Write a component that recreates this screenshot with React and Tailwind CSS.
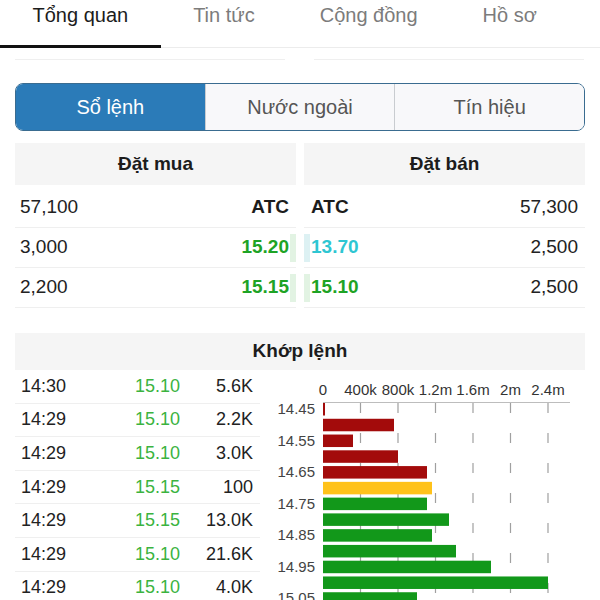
const tabs = ['Tổng quan', 'Tin tức', 'Cộng đồng', 'Hồ sơ'];
const segments = ['Sổ lệnh', 'Nước ngoài', 'Tín hiệu'];

const bids = [
  { qty: '57,100', price: 'ATC', tone: 'atc' },
  { qty: '3,000', price: '15.20', tone: 'up' },
  { qty: '2,200', price: '15.15', tone: 'up' },
];

const asks = [
  { price: 'ATC', qty: '57,300', tone: 'atc' },
  { price: '13.70', qty: '2,500', tone: 'floor' },
  { price: '15.10', qty: '2,500', tone: 'up' },
];

const ticks = [
  ['14:30', '15.10', '5.6K'],
  ['14:29', '15.10', '2.2K'],
  ['14:29', '15.10', '3.0K'],
  ['14:29', '15.15', '100'],
  ['14:29', '15.15', '13.0K'],
  ['14:29', '15.10', '21.6K'],
  ['14:29', '15.10', '4.0K'],
  ['14:29', '15.10', '1.5K'],
];

// volume by price level, width in px (37.5px = 400k)
const levels = [
  { w: 2, c: '#a30b0b' },
  { w: 71, c: '#a30b0b' },
  { w: 30, c: '#a30b0b' },
  { w: 75, c: '#a30b0b' },
  { w: 104, c: '#a30b0b' },
  { w: 109, c: '#ffc21a' },
  { w: 104, c: '#12981a' },
  { w: 126, c: '#12981a' },
  { w: 109, c: '#12981a' },
  { w: 133, c: '#12981a' },
  { w: 168, c: '#12981a' },
  { w: 225, c: '#12981a' },
  { w: 94, c: '#12981a' },
  { w: 60, c: '#12981a' },
];

const axis = ['0', '400k', '800k', '1.2m', '1.6m', '2m', '2.4m'];

const toneClass = {
  atc: 'text-[#1c1c1c] font-bold',
  up: 'text-[#1ea325] font-bold',
  floor: 'text-[#2ec6d2] font-bold',
};

const barClass = {
  up: 'bg-[#e2f3e3]',
  floor: 'bg-[#ddf1f3]',
};

function VolumeChart() {
  const x0 = 53;
  const step = 37.5;
  const pitch = 15.77;
  return (
    <svg width="315" height="240" style={{ fontFamily: '"Liberation Sans", Arial, sans-serif' }}>
      {axis.map((a, i) => (
        <text key={a} x={x0 + i * step} y="25" fontSize="15" fill="#333" textAnchor="middle">
          {a}
        </text>
      ))}
      <line x1={x0} y1="32.5" x2="300" y2="32.5" stroke="#bdbdbd" strokeWidth="1.2" />
      {axis.slice(1).map((a, i) => (
        <line
          key={a}
          x1={x0 + (i + 1) * step}
          y1="33"
          x2={x0 + (i + 1) * step}
          y2="240"
          stroke="#a0a0a0"
          strokeWidth="1.2"
          strokeDasharray="10 20"
        />
      ))}
      {levels.map((l, i) => (
        <rect key={i} x={x0} y={33 + i * pitch} width={l.w} height="12.5" fill={l.c} />
      ))}
      {levels.map((l, i) =>
        i % 2 === 0 ? (
          <text
            key={i}
            x="45"
            y={33 + i * pitch + 11}
            fontSize="15"
            fill="#444"
            textAnchor="end"
          >
            {(14.45 + i * 0.05).toFixed(2)}
          </text>
        ) : null
      )}
    </svg>
  );
}

export default function App() {
  return (
    <div
      className="w-[600px] h-[600px] overflow-hidden bg-white"
      style={{ fontFamily: '"Liberation Sans", Arial, sans-serif' }}
    >
      {/* Top tabs */}
      <div className="flex h-[48px] border-b border-[#ececec]">
        {tabs.map((t, i) => (
          <div
            key={t}
            className={`relative px-[32.5px] pt-[3px] text-[20px] leading-[24px] ${
              i === 0 ? 'text-[#1c1c1c]' : 'text-[#7c7c7c]'
            }`}
          >
            {t}
            {i === 0 && <div className="absolute left-0 right-0 bottom-[-1px] h-[3px] bg-[#111]" />}
          </div>
        ))}
      </div>

      {/* scrolled content edge */}
      <div className="grid grid-cols-2 gap-[29px] pl-[15px] pr-[16px]">
        <div className="h-[12px] border-b border-[#efefef]" />
        <div className="h-[12px] border-b border-[#efefef]" />
      </div>

      {/* Segmented control */}
      <div className="mx-[15px] mt-[23px] flex h-[48px] overflow-hidden rounded-[8px] border border-[#3a6c90]">
        {segments.map((s, i) => (
          <div
            key={s}
            className={`flex flex-1 items-center justify-center text-[20px] ${
              i === 0
                ? 'bg-[#2b7bb8] text-white'
                : 'bg-[#f8f8fa] text-[#555] border-l border-[#c9ccd0]'
            }`}
          >
            {s}
          </div>
        ))}
      </div>

      {/* Order book */}
      <div className="mt-[12px] grid grid-cols-2 gap-2 px-[15px]">
        <div>
          <div className="flex h-[42px] items-center justify-center bg-[#f5f5f5] text-[19px] font-bold text-[#1c1c1c]">
            Đặt mua
          </div>
          <div className="mt-[3px]">
            {bids.map((b) => (
              <div key={b.qty} className="flex h-[40px] items-center border-b border-[#efefef] text-[19px]">
                <span className="flex-1 pl-[5px] text-[#222]">{b.qty}</span>
                <span className={toneClass[b.tone]}>{b.price}</span>
                <span className={`ml-[1px] h-[28px] w-[6px] ${barClass[b.tone] || ''}`} />
              </div>
            ))}
          </div>
        </div>
        <div>
          <div className="flex h-[42px] items-center justify-center bg-[#f5f5f5] text-[19px] font-bold text-[#1c1c1c]">
            Đặt bán
          </div>
          <div className="mt-[3px]">
            {asks.map((a, i) => (
              <div key={i} className="flex h-[40px] items-center border-b border-[#efefef] text-[19px]">
                <span className={`mr-[1px] h-[28px] w-[6px] ${barClass[a.tone] || ''}`} />
                <span className={toneClass[a.tone]}>{a.price}</span>
                <span className="flex-1 pr-[7px] text-right text-[#222]">{a.qty}</span>
              </div>
            ))}
          </div>
        </div>
      </div>

      {/* Matched orders */}
      <div className="mx-[15px] mt-[25px] flex h-[37px] items-center justify-center bg-[#f5f5f5] text-[19px] font-bold text-[#1c1c1c]">
        Khớp lệnh
      </div>
      <div className="flex">
        <div className="ml-[15px] w-[245px]">
          {ticks.map((t, i) => (
            <div key={i} className="flex h-[33.6px] items-center border-b border-[#efefef] text-[18px]">
              <span className="w-[120px] pl-[6px] text-[#222]">{t[0]}</span>
              <span className="w-[45px] text-[#3bb33f]">{t[1]}</span>
              <span className="flex-1 pr-[7px] text-right text-[#222]">{t[2]}</span>
            </div>
          ))}
        </div>
        <div className="ml-[10px]">
          <VolumeChart />
        </div>
      </div>
    </div>
  );
}
